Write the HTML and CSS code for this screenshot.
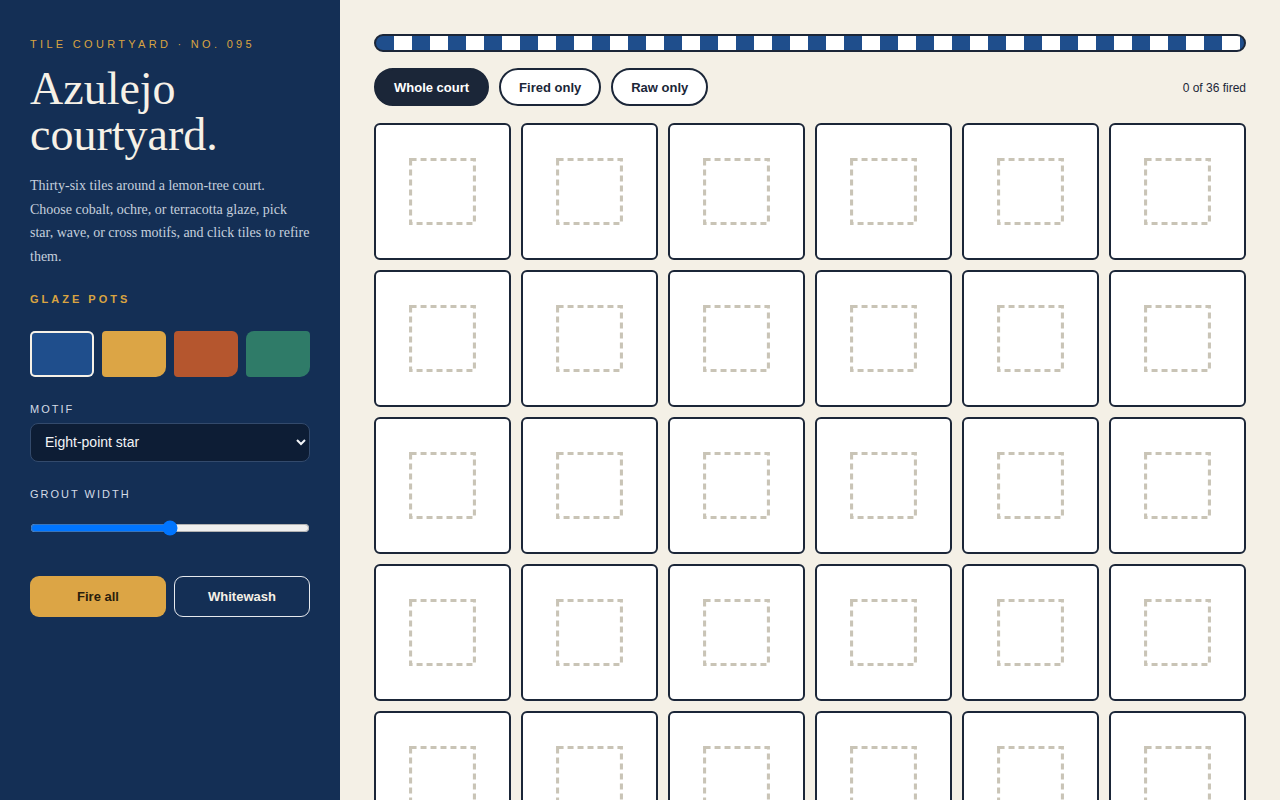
FILE: index.html
```html
<!DOCTYPE html>
<html lang="en">
<head>
<meta charset="utf-8">
<title>Azulejo courtyard</title>
<link rel="stylesheet" href="styles.css">
</head>
<body>
<div class="app">
  <aside class="sidebar">
    <p class="eyebrow">TILE COURTYARD · NO. 095</p>
    <h1 class="title">Azulejo courtyard.</h1>
    <p class="lede">Thirty-six tiles around a lemon-tree court. Choose cobalt, ochre, or terracotta glaze, pick star, wave, or cross motifs, and click tiles to refire them.</p>
    <h2 class="section-label">GLAZE POTS</h2>
    <div class="swatches">
      <button class="swatch swatch-cobalt is-active" aria-label="Cobalt"></button>
      <button class="swatch swatch-ochre" aria-label="Ochre"></button>
      <button class="swatch swatch-terracotta" aria-label="Terracotta"></button>
      <button class="swatch swatch-green" aria-label="Verdigris"></button>
    </div>
    <label class="field-label" for="motif">MOTIF</label>
    <select id="motif" class="select">
      <option>Eight-point star</option>
      <option>Wave</option>
      <option>Cross</option>
    </select>
    <label class="field-label grout-label" for="grout">GROUT WIDTH</label>
    <input id="grout" class="range" type="range" min="0" max="10" value="5">
    <div class="actions">
      <button class="btn btn-fire">Fire all</button>
      <button class="btn btn-wash">Whitewash</button>
    </div>
  </aside>
  <main class="main">
    <div class="border-strip"></div>
    <div class="toolbar">
      <div class="filters">
        <button class="pill is-active">Whole court</button>
        <button class="pill">Fired only</button>
        <button class="pill">Raw only</button>
      </div>
      <span class="count">0 of 36 fired</span>
    </div>
    <div class="grid" id="grid"></div>
  </main>
</div>
<script>
  var grid = document.getElementById('grid');
  var html = '';
  for (var i = 0; i < 36; i++) {
    html += '<button class="tile" aria-label="Tile ' + (i + 1) + '"><svg class="tile-empty" viewBox="0 0 100 100"><rect x="26" y="26" width="48" height="48" /></svg></button>';
  }
  grid.innerHTML = html;
</script>
</body>
</html>
```

FILE: styles.css
```css
* { box-sizing: border-box; }
html, body { margin: 0; padding: 0; }
body {
  background: #f4f0e6;
  font-family: "Liberation Sans", Arial, sans-serif;
  color: #1b2638;
}
.app {
  display: grid;
  grid-template-columns: 340px 1fr;
  min-height: 100vh;
}
.sidebar {
  background: #142f55;
  padding: 37px 30px 30px;
  height: 100vh;
  position: sticky;
  top: 0;
}
.eyebrow {
  margin: 0;
  color: #d9a441;
  font-size: 11px;
  letter-spacing: 3.3px;
  line-height: 14px;
}
.title {
  margin: 15px 0 0;
  font-family: "Liberation Serif", "Times New Roman", serif;
  font-weight: 400;
  font-size: 46px;
  line-height: 46px;
  color: #f6f1e7;
}
.lede {
  margin: 16px 0 0;
  font-family: "Liberation Serif", "Times New Roman", serif;
  font-size: 14px;
  line-height: 23.7px;
  color: #c5cfdd;
}
.section-label {
  margin: 23px 0 0;
  font-size: 11px;
  font-weight: 700;
  letter-spacing: 3px;
  color: #d9a441;
  line-height: 14px;
}
.swatches {
  display: grid;
  grid-template-columns: repeat(4, 1fr);
  gap: 8px;
  margin-top: 25px;
}
.swatch {
  height: 46px;
  border: 0;
  padding: 0;
  border-radius: 4px 6px 10px 4px;
  cursor: pointer;
}
.swatch-cobalt { background: #1f4e8c; }
.swatch-ochre { background: #dca545; }
.swatch-terracotta { background: #b5562e; }
.swatch-green { background: #2f7b68; border-radius: 8px 4px 10px 4px; }
.swatch.is-active { box-shadow: inset 0 0 0 2px #f6f1e7; border-radius: 5px 6px 6px 5px; }
.field-label {
  display: block;
  margin-top: 25px;
  font-size: 11px;
  letter-spacing: 2px;
  color: #d3dbe6;
  line-height: 14px;
}
.select {
  display: block;
  width: 100%;
  height: 39px;
  margin-top: 7px;
  padding: 0 10px;
  background: #0d1d35;
  color: #f2f4f7;
  border: 1px solid #334a6c;
  border-radius: 8px;
  font-family: "Liberation Sans", Arial, sans-serif;
  font-size: 14px;
}
.grout-label { margin-top: 25px; }
.range {
  display: block;
  width: 100%;
  margin: 19px 0 0;
}
.actions {
  display: grid;
  grid-template-columns: 1fr 1fr;
  gap: 8px;
  margin-top: 40px;
}
.btn {
  height: 41px;
  border-radius: 9px;
  font-family: "Liberation Sans", Arial, sans-serif;
  font-weight: 700;
  font-size: 13px;
  cursor: pointer;
}
.btn-fire {
  background: #dca545;
  color: #2a1d0c;
  border: 0;
}
.btn-wash {
  background: transparent;
  color: #f6f1e7;
  border: 1px solid #e6e9ee;
}
.main {
  padding: 34px 34px 34px;
}
.border-strip {
  height: 18px;
  border: 2px solid #1b2638;
  border-radius: 9px;
  background: repeating-linear-gradient(90deg, #1f4e8c 0 18px, #ffffff 18px 36px);
}
.toolbar {
  display: flex;
  align-items: center;
  justify-content: space-between;
  margin-top: 16px;
}
.filters {
  display: flex;
  gap: 10px;
}
.pill {
  height: 38px;
  padding: 0 18px;
  border: 2px solid #1b2638;
  border-radius: 19px;
  background: #ffffff;
  color: #1b2638;
  font-family: "Liberation Sans", Arial, sans-serif;
  font-weight: 700;
  font-size: 13px;
  cursor: pointer;
}
.pill.is-active {
  background: #1b2638;
  color: #ffffff;
}
.count {
  font-size: 12px;
  line-height: 16px;
  padding-top: 2px;
  color: #1b2638;
}
.grid {
  display: grid;
  grid-template-columns: repeat(6, 1fr);
  gap: 10px;
  margin-top: 17px;
}
.tile {
  aspect-ratio: 1 / 1;
  background: #ffffff;
  border: 2px solid #1b2638;
  border-radius: 6px;
  padding: 0;
  display: block;
  cursor: pointer;
}
.tile-empty {
  display: block;
  width: 100%;
  height: 100%;
}
.tile-empty rect {
  fill: none;
  stroke: #c9c4b6;
  stroke-width: 2.3;
  stroke-dasharray: 4.5 3;
}
```
